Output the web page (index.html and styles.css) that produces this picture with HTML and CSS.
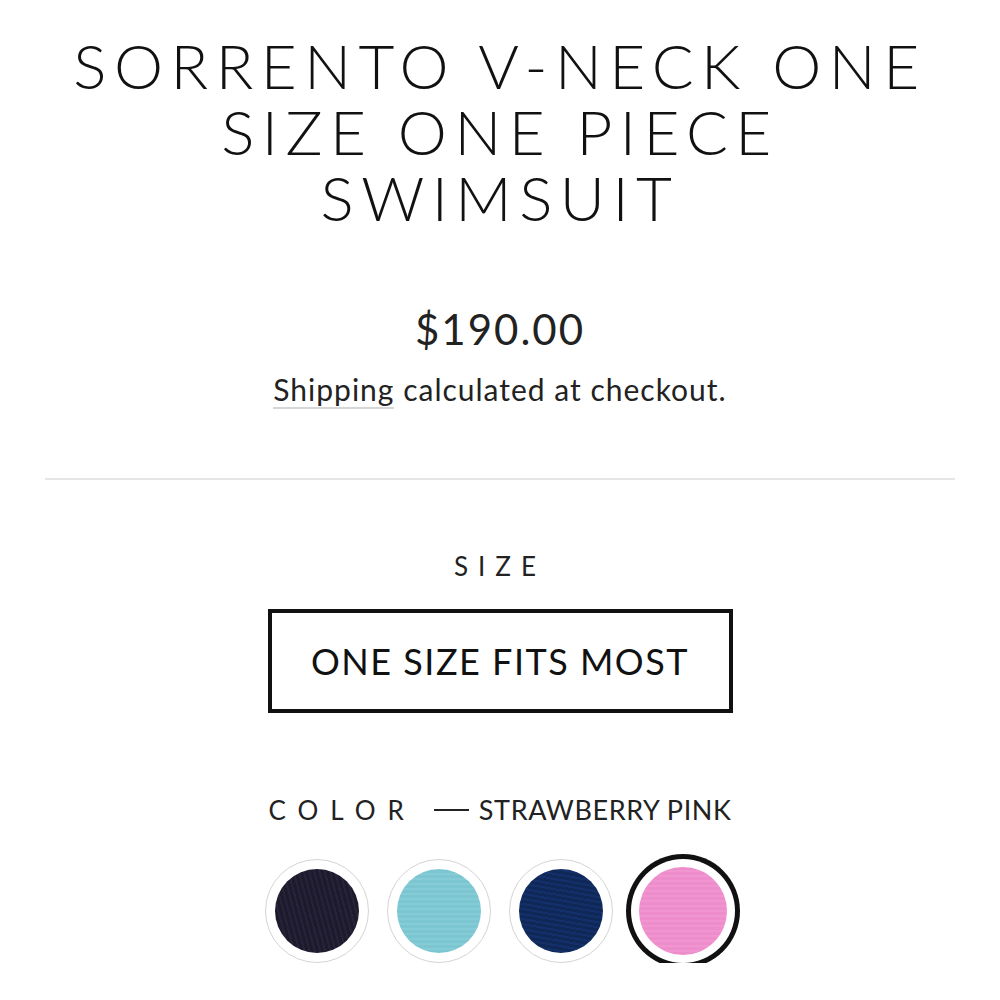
FILE: index.html
```html
<!DOCTYPE html>
<html lang="en">
<head>
    <meta charset="UTF-8">
    <meta name="viewport" content="width=device-width, initial-scale=1.0">
    <title>Sorrento V-Neck One Size One Piece Swimsuit</title>
    <link rel="stylesheet" href="styles.css">
</head>
<body>
    <div id="product">
        <h1 class="product-title">SORRENTO V-NECK ONE SIZE ONE PIECE SWIMSUIT</h1>

        <div class="price-block">
            <div class="price">$190.00</div>
            <div class="shipping"><a href="#" class="shipping-link">Shipping</a> calculated at checkout.</div>
        </div>

        <hr class="divider">

        <div class="option-group">
            <div class="option-label">SIZE</div>
            <button class="size-button">ONE SIZE FITS MOST</button>
        </div>

        <div class="option-group color-group">
            <div class="color-label">
                <span class="option-label">COLOR</span>
                <span class="color-dash"></span>
                <span class="color-name">STRAWBERRY PINK</span>
            </div>
            <div class="swatches">
                <div class="swatch"><span class="swatch-fill black"></span></div>
                <div class="swatch"><span class="swatch-fill aqua"></span></div>
                <div class="swatch"><span class="swatch-fill navy"></span></div>
                <div class="swatch selected"><span class="swatch-fill pink"></span></div>
            </div>
        </div>
    </div>
</body>
</html>
```

FILE: styles.css
```css
body {
    margin: 0;
    background-color: #ffffff;
    color: #1a1a1a;
    font-family: Lato, "Noto Sans", sans-serif;
}

#product {
    display: flex;
    flex-direction: column;
    align-items: center;
    padding: 32px 45px 0;
}

.product-title {
    margin: 0;
    font-size: 62px;
    line-height: 66px;
    font-weight: 300;
    letter-spacing: 7.5px;
    text-align: center;
    color: #111;
    width: 880px;
}

.price-block {
    display: flex;
    flex-direction: column;
    align-items: center;
    margin-top: 74px;
}

.price {
    font-size: 42px;
    line-height: 50px;
    letter-spacing: 2px;
    color: #222;
}

.shipping {
    font-size: 30px;
    line-height: 40px;
    margin-top: 15px;
    letter-spacing: 1px;
    color: #222;
}

.shipping-link {
    color: inherit;
    text-decoration: none;
    border-bottom: 2px solid #d6d6d6;
}

.divider {
    width: 910px;
    border: none;
    border-top: 2px solid #e6e6e6;
    margin: 69px 0 0;
}

.option-group {
    display: flex;
    flex-direction: column;
    align-items: center;
}

.option-label {
    font-size: 26px;
    letter-spacing: 10px;
    color: #222;
}

.option-group .option-label {
    margin-top: 70px;
}

.size-button {
    margin-top: 27px;
    width: 465px;
    height: 104px;
    background: #fff;
    border: 4px solid #111;
    font-family: inherit;
    font-size: 36px;
    letter-spacing: 1.5px;
    color: #111;
}

.color-group {
    margin-top: 80px;
}

.color-label {
    display: flex;
    align-items: center;
}

.color-group .color-label .option-label {
    margin-top: 0;
    letter-spacing: 12px;
}

.color-dash {
    width: 35px;
    height: 2px;
    background: #222;
    margin: 0 10px 0 18px;
}

.color-name {
    font-size: 27px;
    letter-spacing: 0.6px;
    color: #222;
}

.swatches {
    display: flex;
    gap: 18px;
    margin-top: 33px;
}

.swatch {
    width: 104px;
    height: 104px;
    box-sizing: border-box;
    border-radius: 50%;
    border: 1px solid #d4d4d4;
    display: flex;
    align-items: center;
    justify-content: center;
    background: #fff;
}

.swatch.selected {
    border: none;
    box-shadow: 0 0 0 5px #111;
}

.swatch-fill {
    width: 84px;
    height: 84px;
    border-radius: 50%;
}

.selected .swatch-fill {
    width: 88px;
    height: 88px;
}

.black {
    background: repeating-linear-gradient(75deg, #1d1a2c 0 3px, #25223a 3px 5px);
}

.aqua {
    background: repeating-linear-gradient(0deg, #7cc6d1 0 3px, #86ccd6 3px 5px);
}

.navy {
    background: repeating-linear-gradient(10deg, #0f2858 0 3px, #13306a 3px 5px);
}

.pink {
    background: repeating-linear-gradient(0deg, #ed8dcb 0 3px, #f195d0 3px 5px);
}
```
